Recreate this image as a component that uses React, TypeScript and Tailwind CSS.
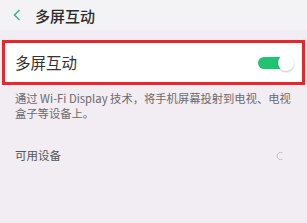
import React from "react"

const font = { fontFamily: '"Noto Sans CJK SC", "Noto Sans", sans-serif' }

function Toggle() {
  return (
    <div className="relative w-[36px] h-[16px] flex items-center">
      <div className="w-[32px] h-[12px] rounded-full bg-[#1fc46e]" />
      <div className="absolute right-0 top-0 w-[16px] h-[16px] rounded-full bg-white shadow-[0_1px_2px_rgba(0,0,0,0.25)]" />
    </div>
  )
}

export default function App() {
  return (
    <div className="w-[307px] h-[223px] overflow-hidden bg-[#f2ecf3]" style={font}>
      <div className="h-[30px] bg-[#f3f2f5] flex items-center pl-[13px]">
        <svg width="8" height="12" viewBox="0 0 8 12">
          <path d="M6.5 1 L1.5 6 L6.5 11" fill="none" stroke="#43b28e" strokeWidth="1.6" />
        </svg>
        <span className="ml-[14px] text-[15px] font-medium text-[#2b2b2b] leading-none">多屏互动</span>
      </div>

      <div className="mt-[10px] mx-[2px] h-[45px] border-[3px] border-[#e8272d] bg-white flex items-center justify-between pl-[10px] pr-[8px]">
        <span className="text-[15.5px] text-[#333] leading-none">多屏互动</span>
        <Toggle />
      </div>

      <div className="mt-[6px] px-[15px] text-[11.3px] leading-[15px] text-[#6a6a6a]">
        <div>通过 Wi-Fi Display 技术，将手机屏幕投射到电视、电视</div>
        <div>盒子等设备上。</div>
      </div>

      <div className="mt-[29px] px-[15px] flex items-center justify-between pr-[23px]">
        <span className="text-[11.5px] text-[#555] leading-none">可用设备</span>
        <svg width="8" height="10" viewBox="0 0 8 10">
          <path d="M6.3 1.8 A3.6 3.6 0 1 0 6.3 8.2" fill="none" stroke="#c2bcc4" strokeWidth="1" />
        </svg>
      </div>
    </div>
  )
}
